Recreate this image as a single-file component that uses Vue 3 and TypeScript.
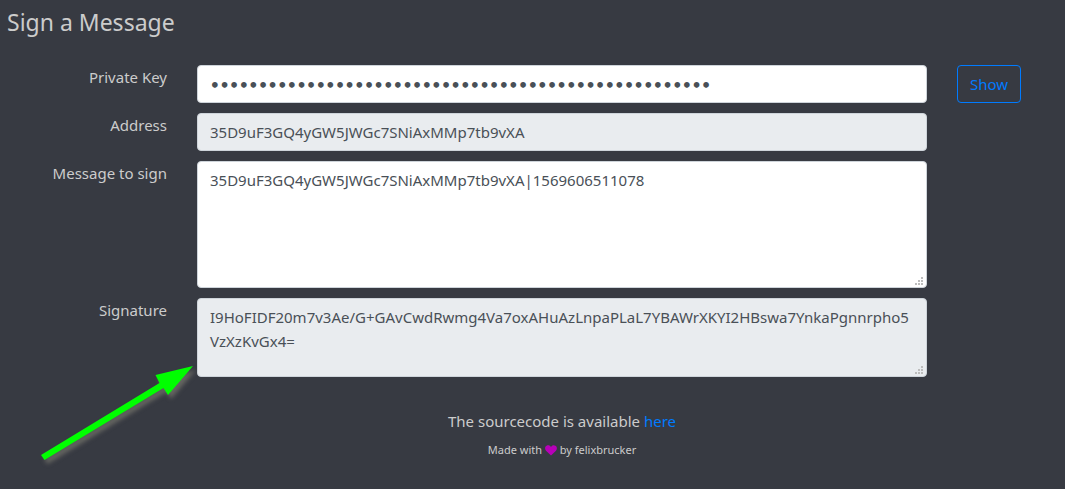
<script setup lang="ts">
import { ref } from 'vue'

const privateKey = ref('L'.repeat(52))
const address = ref('35D9uF3GQ4yGW5JWGc7SNiAxMMp7tb9vXA')
const message = ref('35D9uF3GQ4yGW5JWGc7SNiAxMMp7tb9vXA|1569606511078')
const signature = ref('I9HoFIDF20m7v3Ae/G+GAvCwdRwmg4Va7oxAHuAzLnpaPLaL7YBAWrXKYI2HBswa7YnkaPgnnrpho5VzXzKvGx4=')
const visible = ref(false)
const gripDots = [[6, 0], [3, 3], [6, 3], [0, 6], [3, 6], [6, 6]]
</script>

<template>
  <main class="page">
    <h1 class="title">Sign a Message</h1>
    <form class="form" @submit.prevent>
      <label for="key">Private Key</label>
      <input id="key" v-model="privateKey" class="field" :class="{ masked: !visible }" :type="visible ? 'text' : 'password'" autocomplete="off">
      <button class="show" type="button" @click="visible = !visible">{{ visible ? 'Hide' : 'Show' }}</button>

      <label for="address">Address</label>
      <input id="address" v-model="address" class="field readonly" type="text" readonly>

      <label for="message">Message to sign</label>
      <div class="area">
        <textarea id="message" v-model="message" class="field message" spellcheck="false"></textarea>
        <svg class="grip" viewBox="0 0 8 8" aria-hidden="true">
          <rect v-for="([x, y], i) in gripDots" :key="i" :x="x" :y="y" width="2" height="2" />
        </svg>
      </div>

      <label for="signature">Signature</label>
      <div class="area">
        <textarea id="signature" v-model="signature" class="field readonly signature" readonly spellcheck="false"></textarea>
        <svg class="grip" viewBox="0 0 8 8" aria-hidden="true">
          <rect v-for="([x, y], i) in gripDots" :key="i" :x="x" :y="y" width="2" height="2" />
        </svg>
        <svg class="arrow" viewBox="0 0 170 112" aria-hidden="true">
          <path d="M6 98 124.500 26 120.500 18 158 9 133 38 128.500 31 9.500 103Z" />
        </svg>
      </div>

      <footer class="footer">
        <p class="source">The sourcecode is available <a href="#">here</a></p>
        <p class="credit">
          Made with
          <svg class="heart" viewBox="0 0 12 11" aria-label="love">
            <path d="M6 10.500 1 5.700C-.5 4-.1 1.500 1.500.7 3.300-.2 5 .4 6 1.900 7-.1 9-.2 10.500.7 12.100 1.700 12.400 4 11 5.700Z" />
          </svg>
          by felixbrucker
        </p>
      </footer>
    </form>
  </main>
</template>

<style>
body {
  margin: 0;
  background: #373a42;
}
</style>

<style scoped>
.page {
  box-sizing: border-box;
  min-height: 100vh;
  padding: 8px 0 0 7px;
  overflow: hidden;
  background: #373a42;
  color: #ccc;
  font: 15px/24px "Noto Sans", "Open Sans", sans-serif;
}

.title {
  margin: 0 0 29px;
  font-size: 23px;
  font-weight: 400;
  line-height: 28px;
}

.form {
  display: grid;
  grid-template-columns: 160px minmax(0, 1fr) 108px;
  column-gap: 30px;
  row-gap: 10px;
  align-items: start;
}

label {
  grid-column: 1;
  text-align: right;
}

.field {
  display: block;
  box-sizing: border-box;
  width: 100%;
  height: 38px;
  margin: 0;
  padding: 6px 12px;
  border: 1px solid #ced4da;
  border-radius: 4px;
  outline: 0;
  background: #fff;
  color: #495057;
  font: inherit;
  resize: none;
  overflow: hidden;
}

.field.masked {
  padding-top: 8px;
  font-family: "DejaVu Sans Mono", monospace;
  font-size: 16px;
  font-weight: 700;
}

.field.readonly {
  background: #e9ecef;
}

.field.message {
  height: 127px;
}

.field.signature {
  height: 79px;
  word-break: break-all;
}

.area {
  position: relative;
}

.grip {
  position: absolute;
  right: 4px;
  bottom: 3px;
  width: 8px;
  height: 8px;
  fill: #bdbdbd;
  pointer-events: none;
}

.arrow {
  position: absolute;
  top: 59px;
  right: calc(100% - 8px);
  width: 170px;
  height: 112px;
  fill: #0f0;
  filter: drop-shadow(3px 4px 2px rgb(120 120 110 / 70%));
  pointer-events: none;
}

.show {
  justify-self: start;
  height: 38px;
  padding: 6px 12px;
  border: 1px solid #007bff;
  border-radius: 4px;
  background: transparent;
  color: #007bff;
  font: inherit;
  cursor: pointer;
}

.footer {
  grid-column: 2;
  padding-top: 22px;
  text-align: center;
}

.footer p {
  margin: 0;
}

.source a {
  color: #007bff;
  text-decoration: none;
}

.footer .credit {
  margin-top: 9px;
  font-size: 11px;
  line-height: 16px;
}

.heart {
  width: 12px;
  height: 11px;
  vertical-align: -2px;
  fill: #b800b8;
}
</style>
